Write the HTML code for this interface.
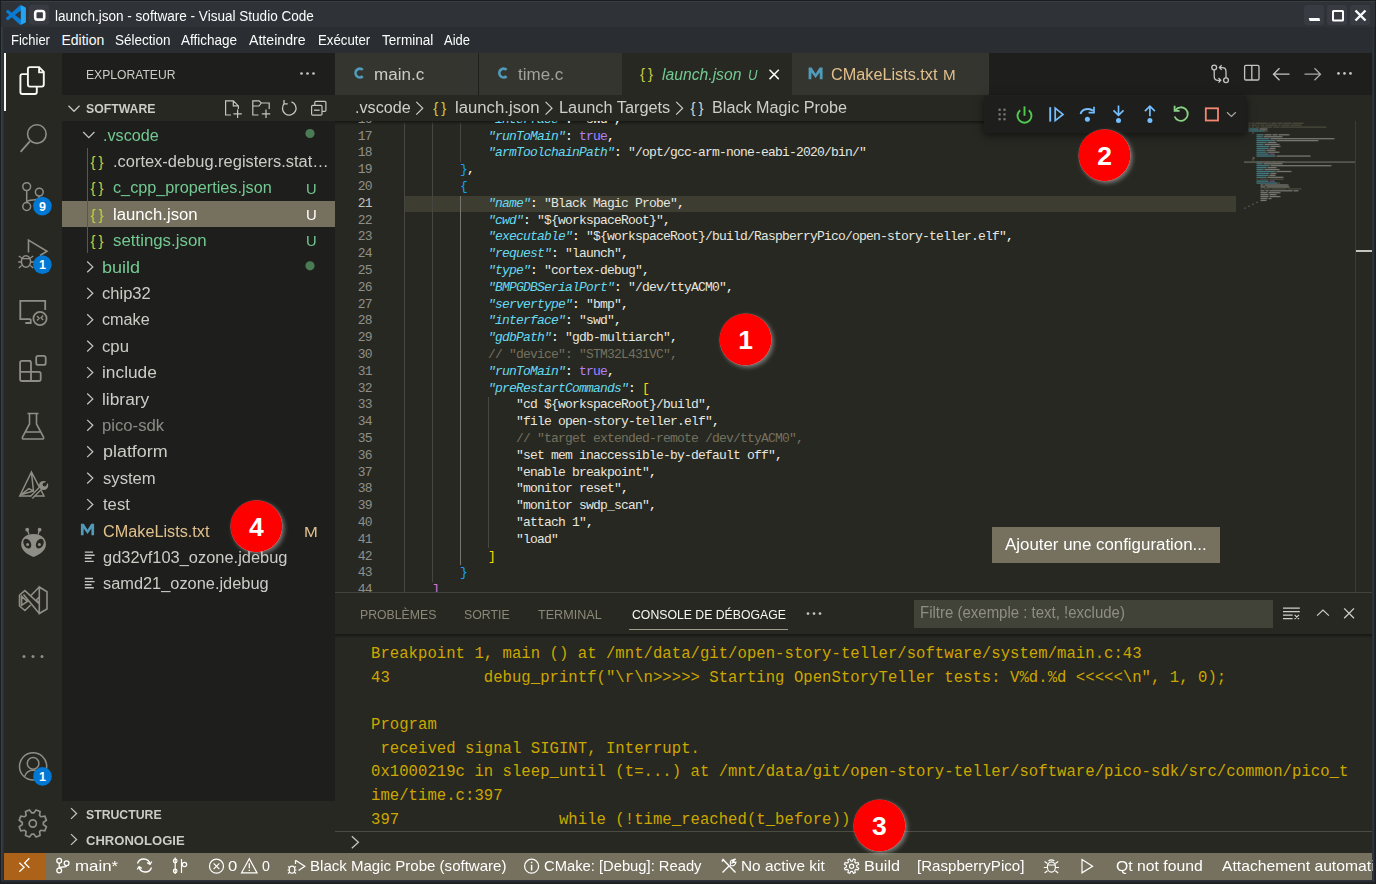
<!DOCTYPE html><html><head><meta charset="utf-8"><style>
*{box-sizing:border-box;margin:0;padding:0}
html,body{width:1376px;height:884px;overflow:hidden;background:#2a2e32}
.a{position:absolute;white-space:pre}
svg{position:absolute;left:0;top:0}
.cd{font-family:"Liberation Mono",monospace;font-size:13px;letter-spacing:-0.8px;line-height:16.8px;color:#f8f8f2}
.k{color:#66d9ef;font-style:italic}.s{color:#e6e6df}.c{color:#75715e}.t{color:#ae81ff}
.cn{font-family:"Liberation Mono",monospace;font-size:15.6px;line-height:23.4px;color:#cca700;letter-spacing:0.04px}

</style></head><body>
<div class="a" style="left:0px;top:0px;width:1376px;height:884px;background:#2a2e32;"></div>
<div class="a" style="left:1px;top:27px;width:1px;height:857px;background:#3a3f47;"></div>
<div class="a" style="left:2px;top:27px;width:1px;height:857px;background:#31363c;"></div>
<div class="a" style="left:3px;top:27px;width:1px;height:857px;background:#2c3034;"></div>
<div class="a" style="left:1372px;top:27px;width:1px;height:857px;background:#2c3039;"></div>
<div class="a" style="left:1373px;top:27px;width:1px;height:857px;background:#303439;"></div>
<div class="a" style="left:1374px;top:27px;width:1px;height:857px;background:#222529;"></div>
<div class="a" style="left:0px;top:880px;width:1376px;height:1px;background:#2c3039;"></div>
<div class="a" style="left:0px;top:881px;width:1376px;height:1px;background:#282b30;"></div>
<div class="a" style="left:0px;top:882px;width:1376px;height:1px;background:#1f2225;"></div>
<div class="a" style="left:0px;top:0px;width:1376px;height:1px;background:#1b1e21;"></div>
<div class="a" style="left:0px;top:883px;width:1376px;height:1px;background:#1c1f22;"></div>
<div class="a" style="left:0px;top:0px;width:1px;height:884px;background:#1b1e21;"></div>
<div class="a" style="left:1375px;top:0px;width:1px;height:884px;background:#1c1f22;"></div>
<div class="a" style="left:1px;top:1px;width:1374px;height:26px;background:#2f3338;"></div>
<div class="a" style="left:1px;top:1px;width:1374px;height:1px;background:#383d42;"></div>
<div class="a" style="left:4px;top:27px;width:1368px;height:26px;background:#2a2e32;"></div>
<div class="a" style="left:4px;top:53px;width:58px;height:800px;background:#272822;"></div>
<div class="a" style="left:4px;top:53px;width:2px;height:58px;background:#f8f8f2;"></div>
<div class="a" style="left:62px;top:53px;width:273px;height:748px;background:#1e1f1c;"></div>
<div class="a" style="left:62px;top:95px;width:273px;height:26.4px;background:#272822;"></div>
<div class="a" style="left:62px;top:801px;width:273px;height:52px;background:#272822;"></div>
<div class="a" style="left:62px;top:200.6px;width:273px;height:26.4px;background:#75715e;"></div>
<div class="a" style="left:86.5px;top:147.8px;width:1px;height:105.6px;background:#585850;"></div>
<div class="a" style="left:335px;top:53px;width:1037px;height:42px;background:#1e1f1c;"></div>
<div class="a" style="left:335px;top:53px;width:143px;height:42px;background:#34352f;"></div>
<div class="a" style="left:479px;top:53px;width:143px;height:42px;background:#34352f;"></div>
<div class="a" style="left:622px;top:53px;width:170px;height:42px;background:#272822;"></div>
<div class="a" style="left:792px;top:53px;width:197px;height:42px;background:#34352f;"></div>
<div class="a" style="left:335px;top:95px;width:1037px;height:26px;background:#272822;"></div>
<div class="a" style="left:335px;top:121px;width:1037px;height:471px;background:#272822;"></div>
<div class="a" style="left:405px;top:195.7px;width:831px;height:16.8px;background:#3e3d32;"></div>
<div class="a" style="left:404px;top:121px;width:1px;height:477.9px;background:#464741;"></div>
<div class="a" style="left:432px;top:121px;width:1px;height:461.1px;background:#464741;"></div>
<div class="a" style="left:460px;top:121px;width:1px;height:41.1px;background:#464741;"></div>
<div class="a" style="left:460px;top:195.7px;width:1px;height:369.6px;background:#767771;"></div>
<div class="a" style="left:488px;top:397.3px;width:1px;height:151.2px;background:#464741;"></div>
<div class="a" style="left:335px;top:121px;width:909px;height:4px;background:linear-gradient(#161713,rgba(39,40,34,0));"></div>
<div class="a" style="left:1355px;top:121px;width:1px;height:471px;background:#3b3c35;"></div>
<div class="a" style="left:1356px;top:250px;width:16px;height:2px;background:#c5c5c0;"></div>
<div class="a" style="left:335px;top:592px;width:1037px;height:1px;background:#414339;"></div>
<div class="a" style="left:335px;top:593px;width:1037px;height:260px;background:#272822;"></div>
<div class="a" style="left:914px;top:600px;width:359px;height:28px;background:#414339;"></div>
<div class="a" style="left:629px;top:629px;width:159px;height:1px;background:#a09d8b;"></div>
<div class="a" style="left:335px;top:633.6px;width:1037px;height:4px;background:linear-gradient(#161713,rgba(39,40,34,0));"></div>
<div class="a" style="left:335px;top:831px;width:1037px;height:1px;background:#4a4b43;"></div>
<div class="a" style="left:992px;top:527px;width:228px;height:36px;background:#75715e;"></div>
<div class="a" style="left:4px;top:853px;width:1368px;height:27px;background:#75715e;"></div>
<div class="a" style="left:4px;top:853px;width:41px;height:27px;background:#ac6218;"></div>
<div class="a" style="left:334px;top:121px;width:1037px;height:471px;overflow:hidden">
<div class="a cd" style="left:0;width:37.8px;text-align:right;top:-9.3px;color:#90908a">16</div>
<div class="a cd" style="left:154px;top:-9.3px"><span class="k">"interface"</span>: <span class="s">"swd"</span>,</div>
<div class="a cd" style="left:0;width:37.8px;text-align:right;top:7.5px;color:#90908a">17</div>
<div class="a cd" style="left:154px;top:7.5px"><span class="k">"runToMain"</span>: <span class="t">true</span>,</div>
<div class="a cd" style="left:0;width:37.8px;text-align:right;top:24.3px;color:#90908a">18</div>
<div class="a cd" style="left:154px;top:24.3px"><span class="k">"armToolchainPath"</span>: <span class="s">"/opt/gcc-arm-none-eabi-2020/bin/"</span></div>
<div class="a cd" style="left:0;width:37.8px;text-align:right;top:41.1px;color:#90908a">19</div>
<div class="a cd" style="left:126px;top:41.1px"><span style="color:#179fff">}</span>,</div>
<div class="a cd" style="left:0;width:37.8px;text-align:right;top:57.9px;color:#90908a">20</div>
<div class="a cd" style="left:126px;top:57.9px"><span style="color:#179fff">{</span></div>
<div class="a cd" style="left:0;width:37.8px;text-align:right;top:74.7px;color:#c2c2bf">21</div>
<div class="a cd" style="left:154px;top:74.7px"><span class="k">"name"</span>: <span class="s">"Black Magic Probe"</span>,</div>
<div class="a cd" style="left:0;width:37.8px;text-align:right;top:91.5px;color:#90908a">22</div>
<div class="a cd" style="left:154px;top:91.5px"><span class="k">"cwd"</span>: <span class="s">"${workspaceRoot}"</span>,</div>
<div class="a cd" style="left:0;width:37.8px;text-align:right;top:108.3px;color:#90908a">23</div>
<div class="a cd" style="left:154px;top:108.3px"><span class="k">"executable"</span>: <span class="s">"${workspaceRoot}/build/RaspberryPico/open-story-teller.elf"</span>,</div>
<div class="a cd" style="left:0;width:37.8px;text-align:right;top:125.1px;color:#90908a">24</div>
<div class="a cd" style="left:154px;top:125.1px"><span class="k">"request"</span>: <span class="s">"launch"</span>,</div>
<div class="a cd" style="left:0;width:37.8px;text-align:right;top:141.9px;color:#90908a">25</div>
<div class="a cd" style="left:154px;top:141.9px"><span class="k">"type"</span>: <span class="s">"cortex-debug"</span>,</div>
<div class="a cd" style="left:0;width:37.8px;text-align:right;top:158.7px;color:#90908a">26</div>
<div class="a cd" style="left:154px;top:158.7px"><span class="k">"BMPGDBSerialPort"</span>: <span class="s">"/dev/ttyACM0"</span>,</div>
<div class="a cd" style="left:0;width:37.8px;text-align:right;top:175.5px;color:#90908a">27</div>
<div class="a cd" style="left:154px;top:175.5px"><span class="k">"servertype"</span>: <span class="s">"bmp"</span>,</div>
<div class="a cd" style="left:0;width:37.8px;text-align:right;top:192.3px;color:#90908a">28</div>
<div class="a cd" style="left:154px;top:192.3px"><span class="k">"interface"</span>: <span class="s">"swd"</span>,</div>
<div class="a cd" style="left:0;width:37.8px;text-align:right;top:209.1px;color:#90908a">29</div>
<div class="a cd" style="left:154px;top:209.1px"><span class="k">"gdbPath"</span>: <span class="s">"gdb-multiarch"</span>,</div>
<div class="a cd" style="left:0;width:37.8px;text-align:right;top:225.9px;color:#90908a">30</div>
<div class="a cd" style="left:154px;top:225.9px"><span class="c">// "device": "STM32L431VC",</span></div>
<div class="a cd" style="left:0;width:37.8px;text-align:right;top:242.7px;color:#90908a">31</div>
<div class="a cd" style="left:154px;top:242.7px"><span class="k">"runToMain"</span>: <span class="t">true</span>,</div>
<div class="a cd" style="left:0;width:37.8px;text-align:right;top:259.5px;color:#90908a">32</div>
<div class="a cd" style="left:154px;top:259.5px"><span class="k">"preRestartCommands"</span>: <span style="color:#ffd700">[</span></div>
<div class="a cd" style="left:0;width:37.8px;text-align:right;top:276.3px;color:#90908a">33</div>
<div class="a cd" style="left:182px;top:276.3px"><span class="s">"cd ${workspaceRoot}/build"</span>,</div>
<div class="a cd" style="left:0;width:37.8px;text-align:right;top:293.1px;color:#90908a">34</div>
<div class="a cd" style="left:182px;top:293.1px"><span class="s">"file open-story-teller.elf"</span>,</div>
<div class="a cd" style="left:0;width:37.8px;text-align:right;top:309.9px;color:#90908a">35</div>
<div class="a cd" style="left:182px;top:309.9px"><span class="c">// "target extended-remote /dev/ttyACM0",</span></div>
<div class="a cd" style="left:0;width:37.8px;text-align:right;top:326.7px;color:#90908a">36</div>
<div class="a cd" style="left:182px;top:326.7px"><span class="s">"set mem inaccessible-by-default off"</span>,</div>
<div class="a cd" style="left:0;width:37.8px;text-align:right;top:343.5px;color:#90908a">37</div>
<div class="a cd" style="left:182px;top:343.5px"><span class="s">"enable breakpoint"</span>,</div>
<div class="a cd" style="left:0;width:37.8px;text-align:right;top:360.3px;color:#90908a">38</div>
<div class="a cd" style="left:182px;top:360.3px"><span class="s">"monitor reset"</span>,</div>
<div class="a cd" style="left:0;width:37.8px;text-align:right;top:377.1px;color:#90908a">39</div>
<div class="a cd" style="left:182px;top:377.1px"><span class="s">"monitor swdp_scan"</span>,</div>
<div class="a cd" style="left:0;width:37.8px;text-align:right;top:393.9px;color:#90908a">40</div>
<div class="a cd" style="left:182px;top:393.9px"><span class="s">"attach 1"</span>,</div>
<div class="a cd" style="left:0;width:37.8px;text-align:right;top:410.7px;color:#90908a">41</div>
<div class="a cd" style="left:182px;top:410.7px"><span class="s">"load"</span></div>
<div class="a cd" style="left:0;width:37.8px;text-align:right;top:427.5px;color:#90908a">42</div>
<div class="a cd" style="left:154px;top:427.5px"><span style="color:#ffd700">]</span></div>
<div class="a cd" style="left:0;width:37.8px;text-align:right;top:444.3px;color:#90908a">43</div>
<div class="a cd" style="left:126px;top:444.3px"><span style="color:#179fff">}</span></div>
<div class="a cd" style="left:0;width:37.8px;text-align:right;top:461.1px;color:#90908a">44</div>
<div class="a cd" style="left:98px;top:461.1px"><span style="color:#da70d6">]</span></div>
</div>
<div class="a cn" style="left:371px;top:643.1px">Breakpoint 1, main () at /mnt/data/git/open-story-teller/software/system/main.c:43</div>
<div class="a cn" style="left:371px;top:666.8px">43          debug_printf("\r\n&gt;&gt;&gt;&gt;&gt; Starting OpenStoryTeller tests: V%d.%d &lt;&lt;&lt;&lt;&lt;\n", 1, 0);</div>
<div class="a cn" style="left:371px;top:714.1px">Program</div>
<div class="a cn" style="left:371px;top:737.7px"> received signal SIGINT, Interrupt.</div>
<div class="a cn" style="left:371px;top:761.4px">0x1000219c in sleep_until (t=...) at /mnt/data/git/open-story-teller/software/pico-sdk/src/common/pico_t</div>
<div class="a cn" style="left:371px;top:785.1px">ime/time.c:397</div>
<div class="a cn" style="left:371px;top:808.7px">397                 while (!time_reached(t_before))</div>
<div id="t0" class="a" style="left:55px;top:9.25px;font-size:14px;line-height:14px;color:#fcfcfc;font-family:'Liberation Sans',sans-serif;font-weight:normal;font-style:normal;transform:scaleX(0.9679);transform-origin:0 0;">launch.json - software - Visual Studio Code</div>
<div id="t1" class="a" style="left:10.5px;top:33.15px;font-size:14px;line-height:14px;color:#fcfcfc;font-family:'Liberation Sans',sans-serif;font-weight:normal;font-style:normal;transform:scaleX(0.9268);transform-origin:0 0;">Fichier</div>
<div id="t2" class="a" style="left:61.4px;top:33.15px;font-size:14px;line-height:14px;color:#fcfcfc;font-family:'Liberation Sans',sans-serif;font-weight:normal;font-style:normal;">Edition</div>
<div id="t3" class="a" style="left:115px;top:33.15px;font-size:14px;line-height:14px;color:#fcfcfc;font-family:'Liberation Sans',sans-serif;font-weight:normal;font-style:normal;transform:scaleX(0.9644);transform-origin:0 0;">Sélection</div>
<div id="t4" class="a" style="left:181px;top:33.15px;font-size:14px;line-height:14px;color:#fcfcfc;font-family:'Liberation Sans',sans-serif;font-weight:normal;font-style:normal;transform:scaleX(0.9655);transform-origin:0 0;">Affichage</div>
<div id="t5" class="a" style="left:249px;top:33.15px;font-size:14px;line-height:14px;color:#fcfcfc;font-family:'Liberation Sans',sans-serif;font-weight:normal;font-style:normal;transform:scaleX(1.0101);transform-origin:0 0;">Atteindre</div>
<div id="t6" class="a" style="left:317.6px;top:33.15px;font-size:14px;line-height:14px;color:#fcfcfc;font-family:'Liberation Sans',sans-serif;font-weight:normal;font-style:normal;transform:scaleX(0.9447);transform-origin:0 0;">Exécuter</div>
<div id="t7" class="a" style="left:381.7px;top:33.15px;font-size:14px;line-height:14px;color:#fcfcfc;font-family:'Liberation Sans',sans-serif;font-weight:normal;font-style:normal;transform:scaleX(0.9713);transform-origin:0 0;">Terminal</div>
<div id="t8" class="a" style="left:444px;top:33.15px;font-size:14px;line-height:14px;color:#fcfcfc;font-family:'Liberation Sans',sans-serif;font-weight:normal;font-style:normal;transform:scaleX(0.9265);transform-origin:0 0;">Aide</div>
<div id="t9" class="a" style="left:85.8px;top:67.69px;font-size:13.6px;line-height:13.6px;color:#ccccc7;font-family:'Liberation Sans',sans-serif;font-weight:normal;font-style:normal;transform:scaleX(0.8920);transform-origin:0 0;">EXPLORATEUR</div>
<div id="t10" class="a" style="left:85.8px;top:102.19px;font-size:13.6px;line-height:13.6px;color:#ccccc7;font-family:'Liberation Sans',sans-serif;font-weight:bold;font-style:normal;transform:scaleX(0.9010);transform-origin:0 0;">SOFTWARE</div>
<div id="t11" class="a" style="left:102.7px;top:127.56px;font-size:16px;line-height:16px;color:#73c991;font-family:'Liberation Sans',sans-serif;font-weight:normal;font-style:normal;transform:scaleX(1.0103);transform-origin:0 0;">.vscode</div>
<div id="t12" class="a" style="left:112.6px;top:153.96px;font-size:16px;line-height:16px;color:#ccccc7;font-family:'Liberation Sans',sans-serif;font-weight:normal;font-style:normal;transform:scaleX(1.0277);transform-origin:0 0;">.cortex-debug.registers.stat…</div>
<div id="t13" class="a" style="left:112.6px;top:180.36px;font-size:16px;line-height:16px;color:#73c991;font-family:'Liberation Sans',sans-serif;font-weight:normal;font-style:normal;transform:scaleX(1.0138);transform-origin:0 0;">c_cpp_properties.json</div>
<div id="t14" class="a" style="left:112.6px;top:206.76px;font-size:16px;line-height:16px;color:#ffffff;font-family:'Liberation Sans',sans-serif;font-weight:normal;font-style:normal;transform:scaleX(1.0452);transform-origin:0 0;">launch.json</div>
<div id="t15" class="a" style="left:112.6px;top:233.16px;font-size:16px;line-height:16px;color:#73c991;font-family:'Liberation Sans',sans-serif;font-weight:normal;font-style:normal;transform:scaleX(1.0526);transform-origin:0 0;">settings.json</div>
<div id="t16" class="a" style="left:102.4px;top:259.56px;font-size:16px;line-height:16px;color:#73c991;font-family:'Liberation Sans',sans-serif;font-weight:normal;font-style:normal;transform:scaleX(1.1255);transform-origin:0 0;">build</div>
<div id="t17" class="a" style="left:102.4px;top:285.96px;font-size:16px;line-height:16px;color:#ccccc7;font-family:'Liberation Sans',sans-serif;font-weight:normal;font-style:normal;transform:scaleX(1.0341);transform-origin:0 0;">chip32</div>
<div id="t18" class="a" style="left:102.4px;top:312.36px;font-size:16px;line-height:16px;color:#ccccc7;font-family:'Liberation Sans',sans-serif;font-weight:normal;font-style:normal;transform:scaleX(1.0127);transform-origin:0 0;">cmake</div>
<div id="t19" class="a" style="left:102.4px;top:338.76px;font-size:16px;line-height:16px;color:#ccccc7;font-family:'Liberation Sans',sans-serif;font-weight:normal;font-style:normal;transform:scaleX(1.0438);transform-origin:0 0;">cpu</div>
<div id="t20" class="a" style="left:102.4px;top:365.16px;font-size:16px;line-height:16px;color:#ccccc7;font-family:'Liberation Sans',sans-serif;font-weight:normal;font-style:normal;transform:scaleX(1.0818);transform-origin:0 0;">include</div>
<div id="t21" class="a" style="left:102.4px;top:391.56px;font-size:16px;line-height:16px;color:#ccccc7;font-family:'Liberation Sans',sans-serif;font-weight:normal;font-style:normal;transform:scaleX(1.0843);transform-origin:0 0;">library</div>
<div id="t22" class="a" style="left:102.4px;top:417.96px;font-size:16px;line-height:16px;color:#8b8b86;font-family:'Liberation Sans',sans-serif;font-weight:normal;font-style:normal;transform:scaleX(1.0432);transform-origin:0 0;">pico-sdk</div>
<div id="t23" class="a" style="left:102.5px;top:444.36px;font-size:16px;line-height:16px;color:#ccccc7;font-family:'Liberation Sans',sans-serif;font-weight:normal;font-style:normal;transform:scaleX(1.1187);transform-origin:0 0;">platform</div>
<div id="t24" class="a" style="left:102.5px;top:470.76px;font-size:16px;line-height:16px;color:#ccccc7;font-family:'Liberation Sans',sans-serif;font-weight:normal;font-style:normal;transform:scaleX(1.0410);transform-origin:0 0;">system</div>
<div id="t25" class="a" style="left:102.5px;top:497.16px;font-size:16px;line-height:16px;color:#ccccc7;font-family:'Liberation Sans',sans-serif;font-weight:normal;font-style:normal;transform:scaleX(1.0399);transform-origin:0 0;">test</div>
<div id="t26" class="a" style="left:102.5px;top:523.56px;font-size:16px;line-height:16px;color:#e2c08d;font-family:'Liberation Sans',sans-serif;font-weight:normal;font-style:normal;transform:scaleX(1.0151);transform-origin:0 0;">CMakeLists.txt</div>
<div id="t27" class="a" style="left:102.5px;top:549.96px;font-size:16px;line-height:16px;color:#ccccc7;font-family:'Liberation Sans',sans-serif;font-weight:normal;font-style:normal;transform:scaleX(1.0266);transform-origin:0 0;">gd32vf103_ozone.jdebug</div>
<div id="t28" class="a" style="left:102.5px;top:576.36px;font-size:16px;line-height:16px;color:#ccccc7;font-family:'Liberation Sans',sans-serif;font-weight:normal;font-style:normal;transform:scaleX(1.0227);transform-origin:0 0;">samd21_ozone.jdebug</div>
<div id="t29" class="a" style="left:306px;top:181.63px;font-size:14.5px;line-height:14.5px;color:#73c991;font-family:'Liberation Sans',sans-serif;font-weight:normal;font-style:normal;transform:scaleX(1.0125);transform-origin:0 0;">U</div>
<div id="t30" class="a" style="left:306px;top:208.03px;font-size:14.5px;line-height:14.5px;color:#ffffff;font-family:'Liberation Sans',sans-serif;font-weight:normal;font-style:normal;transform:scaleX(1.0252);transform-origin:0 0;">U</div>
<div id="t31" class="a" style="left:306px;top:234.43px;font-size:14.5px;line-height:14.5px;color:#73c991;font-family:'Liberation Sans',sans-serif;font-weight:normal;font-style:normal;transform:scaleX(1.0125);transform-origin:0 0;">U</div>
<div id="t32" class="a" style="left:303.7px;top:524.83px;font-size:14.5px;line-height:14.5px;color:#e2c08d;font-family:'Liberation Sans',sans-serif;font-weight:normal;font-style:normal;transform:scaleX(1.1413);transform-origin:0 0;">M</div>
<div id="t33" class="a" style="left:85.8px;top:808.09px;font-size:13.6px;line-height:13.6px;color:#ccccc7;font-family:'Liberation Sans',sans-serif;font-weight:bold;font-style:normal;transform:scaleX(0.9019);transform-origin:0 0;">STRUCTURE</div>
<div id="t34" class="a" style="left:85.8px;top:834.09px;font-size:13.6px;line-height:13.6px;color:#ccccc7;font-family:'Liberation Sans',sans-serif;font-weight:bold;font-style:normal;transform:scaleX(0.9604);transform-origin:0 0;">CHRONOLOGIE</div>
<div id="t35" class="a" style="left:373.8px;top:66.66px;font-size:16px;line-height:16px;color:#ccccc7;font-family:'Liberation Sans',sans-serif;font-weight:normal;font-style:normal;transform:scaleX(1.0655);transform-origin:0 0;">main.c</div>
<div id="t36" class="a" style="left:517.7px;top:66.66px;font-size:16px;line-height:16px;color:#a3a39c;font-family:'Liberation Sans',sans-serif;font-weight:normal;font-style:normal;transform:scaleX(1.0615);transform-origin:0 0;">time.c</div>
<div id="t37" class="a" style="left:662px;top:66.66px;font-size:16px;line-height:16px;color:#73c991;font-family:'Liberation Sans',sans-serif;font-weight:normal;font-style:italic;transform:scaleX(0.9813);transform-origin:0 0;">launch.json</div>
<div id="t38" class="a" style="left:747.7px;top:68.01px;font-size:14.4px;line-height:14.4px;color:#73c991;font-family:'Liberation Sans',sans-serif;font-weight:normal;font-style:italic;transform:scaleX(0.9075);transform-origin:0 0;">U</div>
<div id="t39" class="a" style="left:830.6px;top:66.66px;font-size:16px;line-height:16px;color:#e2c08d;font-family:'Liberation Sans',sans-serif;font-weight:normal;font-style:normal;transform:scaleX(1.0149);transform-origin:0 0;">CMakeLists.txt</div>
<div id="t40" class="a" style="left:943.2px;top:68.01px;font-size:14.4px;line-height:14.4px;color:#e2c08d;font-family:'Liberation Sans',sans-serif;font-weight:normal;font-style:normal;transform:scaleX(1.0550);transform-origin:0 0;">M</div>
<div id="t41" class="a" style="left:355px;top:100.46px;font-size:16px;line-height:16px;color:#cfcfca;font-family:'Liberation Sans',sans-serif;font-weight:normal;font-style:normal;transform:scaleX(1.0099);transform-origin:0 0;">.vscode</div>
<div id="t42" class="a" style="left:455.3px;top:100.46px;font-size:16px;line-height:16px;color:#cfcfca;font-family:'Liberation Sans',sans-serif;font-weight:normal;font-style:normal;transform:scaleX(1.0451);transform-origin:0 0;">launch.json</div>
<div id="t43" class="a" style="left:558.6px;top:100.46px;font-size:16px;line-height:16px;color:#cfcfca;font-family:'Liberation Sans',sans-serif;font-weight:normal;font-style:normal;transform:scaleX(1.0192);transform-origin:0 0;">Launch Targets</div>
<div id="t44" class="a" style="left:711.6px;top:100.46px;font-size:16px;line-height:16px;color:#cfcfca;font-family:'Liberation Sans',sans-serif;font-weight:normal;font-style:normal;transform:scaleX(1.0121);transform-origin:0 0;">Black Magic Probe</div>
<div id="t45" class="a" style="left:359.6px;top:607.79px;font-size:13.6px;line-height:13.6px;color:#8b8877;font-family:'Liberation Sans',sans-serif;font-weight:normal;font-style:normal;transform:scaleX(0.9030);transform-origin:0 0;">PROBLÈMES</div>
<div id="t46" class="a" style="left:463.8px;top:607.79px;font-size:13.6px;line-height:13.6px;color:#8b8877;font-family:'Liberation Sans',sans-serif;font-weight:normal;font-style:normal;transform:scaleX(0.9072);transform-origin:0 0;">SORTIE</div>
<div id="t47" class="a" style="left:538px;top:607.79px;font-size:13.6px;line-height:13.6px;color:#8b8877;font-family:'Liberation Sans',sans-serif;font-weight:normal;font-style:normal;transform:scaleX(0.9260);transform-origin:0 0;">TERMINAL</div>
<div id="t48" class="a" style="left:631.6px;top:607.79px;font-size:13.6px;line-height:13.6px;color:#f8f8f2;font-family:'Liberation Sans',sans-serif;font-weight:normal;font-style:normal;transform:scaleX(0.9013);transform-origin:0 0;">CONSOLE DE DÉBOGAGE</div>
<div id="t49" class="a" style="left:920.3px;top:605.36px;font-size:16px;line-height:16px;color:#8f8e85;font-family:'Liberation Sans',sans-serif;font-weight:normal;font-style:normal;transform:scaleX(0.9369);transform-origin:0 0;">Filtre (exemple : text, !exclude)</div>
<div id="t50" class="a" style="left:1005px;top:537.36px;font-size:16px;line-height:16px;color:#ffffff;font-family:'Liberation Sans',sans-serif;font-weight:normal;font-style:normal;transform:scaleX(1.0544);transform-origin:0 0;">Ajouter une configuration...</div>
<div id="t51" class="a" style="left:75.3px;top:859.27px;font-size:14.8px;line-height:14.8px;color:#ffffff;font-family:'Liberation Sans',sans-serif;font-weight:normal;font-style:normal;transform:scaleX(1.1393);transform-origin:0 0;">main*</div>
<div id="t52" class="a" style="left:228px;top:859.27px;font-size:14.8px;line-height:14.8px;color:#ffffff;font-family:'Liberation Sans',sans-serif;font-weight:normal;font-style:normal;transform:scaleX(1.1250);transform-origin:0 0;">0</div>
<div id="t53" class="a" style="left:261.5px;top:859.27px;font-size:14.8px;line-height:14.8px;color:#ffffff;font-family:'Liberation Sans',sans-serif;font-weight:normal;font-style:normal;transform:scaleX(0.9609);transform-origin:0 0;">0</div>
<div id="t54" class="a" style="left:309.6px;top:859.27px;font-size:14.8px;line-height:14.8px;color:#ffffff;font-family:'Liberation Sans',sans-serif;font-weight:normal;font-style:normal;transform:scaleX(1.0167);transform-origin:0 0;">Black Magic Probe (software)</div>
<div id="t55" class="a" style="left:544.3px;top:859.27px;font-size:14.8px;line-height:14.8px;color:#ffffff;font-family:'Liberation Sans',sans-serif;font-weight:normal;font-style:normal;transform:scaleX(0.9973);transform-origin:0 0;">CMake: [Debug]: Ready</div>
<div id="t56" class="a" style="left:741.4px;top:859.27px;font-size:14.8px;line-height:14.8px;color:#ffffff;font-family:'Liberation Sans',sans-serif;font-weight:normal;font-style:normal;transform:scaleX(1.0392);transform-origin:0 0;">No active kit</div>
<div id="t57" class="a" style="left:864px;top:859.27px;font-size:14.8px;line-height:14.8px;color:#ffffff;font-family:'Liberation Sans',sans-serif;font-weight:normal;font-style:normal;transform:scaleX(1.0968);transform-origin:0 0;">Build</div>
<div id="t58" class="a" style="left:917.4px;top:859.27px;font-size:14.8px;line-height:14.8px;color:#ffffff;font-family:'Liberation Sans',sans-serif;font-weight:normal;font-style:normal;transform:scaleX(1.0204);transform-origin:0 0;">[RaspberryPico]</div>
<div id="t59" class="a" style="left:1115.6px;top:859.27px;font-size:14.8px;line-height:14.8px;color:#ffffff;font-family:'Liberation Sans',sans-serif;font-weight:normal;font-style:normal;transform:scaleX(1.0648);transform-origin:0 0;">Qt not found</div>
<div id="t60" class="a" style="left:1221.5px;top:859.27px;font-size:14.8px;line-height:14.8px;color:#ffffff;font-family:'Liberation Sans',sans-serif;font-weight:normal;font-style:normal;width:142px;overflow:hidden;transform:scaleX(1.06);transform-origin:0 0;">Attachement automatique : Intelligent</div>
<svg width="1376" height="884" viewBox="0 0 1376 884"><rect x="1248.5" y="122.60" width="2" height="1.3" fill="#75715e" opacity="0.45"/><rect x="1251.5" y="122.60" width="3" height="1.3" fill="#75715e" opacity="0.45"/><rect x="1255.5" y="122.60" width="12" height="1.3" fill="#75715e" opacity="0.45"/><rect x="1268.5" y="122.60" width="2" height="1.3" fill="#75715e" opacity="0.45"/><rect x="1271.5" y="122.60" width="5" height="1.3" fill="#75715e" opacity="0.45"/><rect x="1277.5" y="122.60" width="5" height="1.3" fill="#75715e" opacity="0.45"/><rect x="1283.5" y="122.60" width="8" height="1.3" fill="#75715e" opacity="0.45"/><rect x="1292.5" y="122.60" width="11" height="1.3" fill="#75715e" opacity="0.45"/><rect x="1248.5" y="124.53" width="2" height="1.3" fill="#75715e" opacity="0.45"/><rect x="1251.5" y="124.53" width="5" height="1.3" fill="#75715e" opacity="0.45"/><rect x="1257.5" y="124.53" width="2" height="1.3" fill="#75715e" opacity="0.45"/><rect x="1260.5" y="124.53" width="4" height="1.3" fill="#75715e" opacity="0.45"/><rect x="1265.5" y="124.53" width="12" height="1.3" fill="#75715e" opacity="0.45"/><rect x="1278.5" y="124.53" width="2" height="1.3" fill="#75715e" opacity="0.45"/><rect x="1281.5" y="124.53" width="8" height="1.3" fill="#75715e" opacity="0.45"/><rect x="1290.5" y="124.53" width="11" height="1.3" fill="#75715e" opacity="0.45"/><rect x="1248.5" y="126.46" width="2" height="1.3" fill="#75715e" opacity="0.45"/><rect x="1251.5" y="126.46" width="3" height="1.3" fill="#75715e" opacity="0.45"/><rect x="1255.5" y="126.46" width="4" height="1.3" fill="#75715e" opacity="0.45"/><rect x="1260.5" y="126.46" width="12" height="1.3" fill="#75715e" opacity="0.45"/><rect x="1273.5" y="126.46" width="6" height="1.3" fill="#75715e" opacity="0.45"/><rect x="1280.5" y="126.46" width="46" height="1.3" fill="#75715e" opacity="0.45"/><rect x="1248.5" y="128.39" width="9" height="1.3" fill="#66d9ef" opacity="0.45"/><rect x="1257.5" y="128.39" width="1" height="1.3" fill="#d8d8d0" opacity="0.45"/><rect x="1259.5" y="128.39" width="7" height="1.3" fill="#d8d8d0" opacity="0.45"/><rect x="1266.5" y="128.39" width="1" height="1.3" fill="#d8d8d0" opacity="0.45"/><rect x="1248.5" y="130.32" width="16" height="1.3" fill="#66d9ef" opacity="0.45"/><rect x="1264.5" y="130.32" width="1" height="1.3" fill="#d8d8d0" opacity="0.45"/><rect x="1266.5" y="130.32" width="1" height="1.3" fill="#d8d8d0" opacity="0.45"/><rect x="1252.5" y="132.25" width="1" height="1.3" fill="#d8d8d0" opacity="0.45"/><rect x="1256.5" y="134.18" width="6" height="1.3" fill="#66d9ef" opacity="0.45"/><rect x="1262.5" y="134.18" width="1" height="1.3" fill="#d8d8d0" opacity="0.45"/><rect x="1264.5" y="134.18" width="7" height="1.3" fill="#d8d8d0" opacity="0.45"/><rect x="1272.5" y="134.18" width="5" height="1.3" fill="#d8d8d0" opacity="0.45"/><rect x="1278.5" y="134.18" width="10" height="1.3" fill="#d8d8d0" opacity="0.45"/><rect x="1288.5" y="134.18" width="1" height="1.3" fill="#d8d8d0" opacity="0.45"/><rect x="1256.5" y="136.11" width="5" height="1.3" fill="#66d9ef" opacity="0.45"/><rect x="1261.5" y="136.11" width="1" height="1.3" fill="#d8d8d0" opacity="0.45"/><rect x="1263.5" y="136.11" width="18" height="1.3" fill="#d8d8d0" opacity="0.45"/><rect x="1281.5" y="136.11" width="1" height="1.3" fill="#d8d8d0" opacity="0.45"/><rect x="1256.5" y="138.04" width="12" height="1.3" fill="#66d9ef" opacity="0.45"/><rect x="1268.5" y="138.04" width="1" height="1.3" fill="#d8d8d0" opacity="0.45"/><rect x="1270.5" y="138.04" width="63" height="1.3" fill="#d8d8d0" opacity="0.45"/><rect x="1333.5" y="138.04" width="1" height="1.3" fill="#d8d8d0" opacity="0.45"/><rect x="1256.5" y="139.97" width="18" height="1.3" fill="#66d9ef" opacity="0.45"/><rect x="1274.5" y="139.97" width="1" height="1.3" fill="#d8d8d0" opacity="0.45"/><rect x="1276.5" y="139.97" width="41" height="1.3" fill="#d8d8d0" opacity="0.45"/><rect x="1317.5" y="139.97" width="1" height="1.3" fill="#d8d8d0" opacity="0.45"/><rect x="1256.5" y="141.90" width="9" height="1.3" fill="#66d9ef" opacity="0.45"/><rect x="1265.5" y="141.90" width="1" height="1.3" fill="#d8d8d0" opacity="0.45"/><rect x="1267.5" y="141.90" width="8" height="1.3" fill="#d8d8d0" opacity="0.45"/><rect x="1275.5" y="141.90" width="1" height="1.3" fill="#d8d8d0" opacity="0.45"/><rect x="1256.5" y="143.83" width="6" height="1.3" fill="#66d9ef" opacity="0.45"/><rect x="1262.5" y="143.83" width="1" height="1.3" fill="#d8d8d0" opacity="0.45"/><rect x="1264.5" y="143.83" width="14" height="1.3" fill="#d8d8d0" opacity="0.45"/><rect x="1278.5" y="143.83" width="1" height="1.3" fill="#d8d8d0" opacity="0.45"/><rect x="1256.5" y="145.76" width="12" height="1.3" fill="#66d9ef" opacity="0.45"/><rect x="1268.5" y="145.76" width="1" height="1.3" fill="#d8d8d0" opacity="0.45"/><rect x="1270.5" y="145.76" width="9" height="1.3" fill="#d8d8d0" opacity="0.45"/><rect x="1279.5" y="145.76" width="1" height="1.3" fill="#d8d8d0" opacity="0.45"/><rect x="1256.5" y="147.69" width="11" height="1.3" fill="#66d9ef" opacity="0.45"/><rect x="1267.5" y="147.69" width="1" height="1.3" fill="#d8d8d0" opacity="0.45"/><rect x="1269.5" y="147.69" width="5" height="1.3" fill="#d8d8d0" opacity="0.45"/><rect x="1274.5" y="147.69" width="1" height="1.3" fill="#d8d8d0" opacity="0.45"/><rect x="1256.5" y="149.62" width="8" height="1.3" fill="#66d9ef" opacity="0.45"/><rect x="1264.5" y="149.62" width="1" height="1.3" fill="#d8d8d0" opacity="0.45"/><rect x="1266.5" y="149.62" width="8" height="1.3" fill="#d8d8d0" opacity="0.45"/><rect x="1274.5" y="149.62" width="1" height="1.3" fill="#d8d8d0" opacity="0.45"/><rect x="1256.5" y="151.55" width="9" height="1.3" fill="#66d9ef" opacity="0.45"/><rect x="1265.5" y="151.55" width="1" height="1.3" fill="#d8d8d0" opacity="0.45"/><rect x="1267.5" y="151.55" width="11" height="1.3" fill="#d8d8d0" opacity="0.45"/><rect x="1278.5" y="151.55" width="1" height="1.3" fill="#d8d8d0" opacity="0.45"/><rect x="1256.5" y="153.48" width="11" height="1.3" fill="#66d9ef" opacity="0.45"/><rect x="1267.5" y="153.48" width="1" height="1.3" fill="#d8d8d0" opacity="0.45"/><rect x="1269.5" y="153.48" width="4" height="1.3" fill="#ae81ff" opacity="0.45"/><rect x="1273.5" y="153.48" width="1" height="1.3" fill="#d8d8d0" opacity="0.45"/><rect x="1256.5" y="155.41" width="18" height="1.3" fill="#66d9ef" opacity="0.45"/><rect x="1274.5" y="155.41" width="1" height="1.3" fill="#d8d8d0" opacity="0.45"/><rect x="1276.5" y="155.41" width="34" height="1.3" fill="#d8d8d0" opacity="0.45"/><rect x="1252.5" y="157.34" width="2" height="1.3" fill="#d8d8d0" opacity="0.45"/><rect x="1252.5" y="159.27" width="1" height="1.3" fill="#d8d8d0" opacity="0.45"/><rect x="1256.5" y="161.20" width="6" height="1.3" fill="#66d9ef" opacity="0.45"/><rect x="1262.5" y="161.20" width="1" height="1.3" fill="#d8d8d0" opacity="0.45"/><rect x="1264.5" y="161.20" width="6" height="1.3" fill="#d8d8d0" opacity="0.45"/><rect x="1271.5" y="161.20" width="5" height="1.3" fill="#d8d8d0" opacity="0.45"/><rect x="1277.5" y="161.20" width="6" height="1.3" fill="#d8d8d0" opacity="0.45"/><rect x="1283.5" y="161.20" width="1" height="1.3" fill="#d8d8d0" opacity="0.45"/><rect x="1256.5" y="163.13" width="5" height="1.3" fill="#66d9ef" opacity="0.45"/><rect x="1261.5" y="163.13" width="1" height="1.3" fill="#d8d8d0" opacity="0.45"/><rect x="1263.5" y="163.13" width="18" height="1.3" fill="#d8d8d0" opacity="0.45"/><rect x="1281.5" y="163.13" width="1" height="1.3" fill="#d8d8d0" opacity="0.45"/><rect x="1256.5" y="165.06" width="12" height="1.3" fill="#66d9ef" opacity="0.45"/><rect x="1268.5" y="165.06" width="1" height="1.3" fill="#d8d8d0" opacity="0.45"/><rect x="1270.5" y="165.06" width="60" height="1.3" fill="#d8d8d0" opacity="0.45"/><rect x="1330.5" y="165.06" width="1" height="1.3" fill="#d8d8d0" opacity="0.45"/><rect x="1256.5" y="166.99" width="9" height="1.3" fill="#66d9ef" opacity="0.45"/><rect x="1265.5" y="166.99" width="1" height="1.3" fill="#d8d8d0" opacity="0.45"/><rect x="1267.5" y="166.99" width="8" height="1.3" fill="#d8d8d0" opacity="0.45"/><rect x="1275.5" y="166.99" width="1" height="1.3" fill="#d8d8d0" opacity="0.45"/><rect x="1256.5" y="168.92" width="6" height="1.3" fill="#66d9ef" opacity="0.45"/><rect x="1262.5" y="168.92" width="1" height="1.3" fill="#d8d8d0" opacity="0.45"/><rect x="1264.5" y="168.92" width="14" height="1.3" fill="#d8d8d0" opacity="0.45"/><rect x="1278.5" y="168.92" width="1" height="1.3" fill="#d8d8d0" opacity="0.45"/><rect x="1256.5" y="170.85" width="18" height="1.3" fill="#66d9ef" opacity="0.45"/><rect x="1274.5" y="170.85" width="1" height="1.3" fill="#d8d8d0" opacity="0.45"/><rect x="1276.5" y="170.85" width="14" height="1.3" fill="#d8d8d0" opacity="0.45"/><rect x="1290.5" y="170.85" width="1" height="1.3" fill="#d8d8d0" opacity="0.45"/><rect x="1256.5" y="172.78" width="12" height="1.3" fill="#66d9ef" opacity="0.45"/><rect x="1268.5" y="172.78" width="1" height="1.3" fill="#d8d8d0" opacity="0.45"/><rect x="1270.5" y="172.78" width="5" height="1.3" fill="#d8d8d0" opacity="0.45"/><rect x="1275.5" y="172.78" width="1" height="1.3" fill="#d8d8d0" opacity="0.45"/><rect x="1256.5" y="174.71" width="11" height="1.3" fill="#66d9ef" opacity="0.45"/><rect x="1267.5" y="174.71" width="1" height="1.3" fill="#d8d8d0" opacity="0.45"/><rect x="1269.5" y="174.71" width="5" height="1.3" fill="#d8d8d0" opacity="0.45"/><rect x="1274.5" y="174.71" width="1" height="1.3" fill="#d8d8d0" opacity="0.45"/><rect x="1256.5" y="176.64" width="9" height="1.3" fill="#66d9ef" opacity="0.45"/><rect x="1265.5" y="176.64" width="1" height="1.3" fill="#d8d8d0" opacity="0.45"/><rect x="1267.5" y="176.64" width="15" height="1.3" fill="#d8d8d0" opacity="0.45"/><rect x="1282.5" y="176.64" width="1" height="1.3" fill="#d8d8d0" opacity="0.45"/><rect x="1256.5" y="178.57" width="2" height="1.3" fill="#75715e" opacity="0.45"/><rect x="1259.5" y="178.57" width="9" height="1.3" fill="#75715e" opacity="0.45"/><rect x="1269.5" y="178.57" width="14" height="1.3" fill="#75715e" opacity="0.45"/><rect x="1256.5" y="180.50" width="11" height="1.3" fill="#66d9ef" opacity="0.45"/><rect x="1267.5" y="180.50" width="1" height="1.3" fill="#d8d8d0" opacity="0.45"/><rect x="1269.5" y="180.50" width="4" height="1.3" fill="#ae81ff" opacity="0.45"/><rect x="1273.5" y="180.50" width="1" height="1.3" fill="#d8d8d0" opacity="0.45"/><rect x="1256.5" y="182.43" width="20" height="1.3" fill="#66d9ef" opacity="0.45"/><rect x="1276.5" y="182.43" width="1" height="1.3" fill="#d8d8d0" opacity="0.45"/><rect x="1278.5" y="182.43" width="1" height="1.3" fill="#d8d8d0" opacity="0.45"/><rect x="1260.5" y="184.36" width="3" height="1.3" fill="#d8d8d0" opacity="0.45"/><rect x="1264.5" y="184.36" width="23" height="1.3" fill="#d8d8d0" opacity="0.45"/><rect x="1287.5" y="184.36" width="1" height="1.3" fill="#d8d8d0" opacity="0.45"/><rect x="1260.5" y="186.29" width="5" height="1.3" fill="#d8d8d0" opacity="0.45"/><rect x="1266.5" y="186.29" width="22" height="1.3" fill="#d8d8d0" opacity="0.45"/><rect x="1288.5" y="186.29" width="1" height="1.3" fill="#d8d8d0" opacity="0.45"/><rect x="1260.5" y="188.22" width="2" height="1.3" fill="#75715e" opacity="0.45"/><rect x="1263.5" y="188.22" width="7" height="1.3" fill="#75715e" opacity="0.45"/><rect x="1271.5" y="188.22" width="15" height="1.3" fill="#75715e" opacity="0.45"/><rect x="1287.5" y="188.22" width="14" height="1.3" fill="#75715e" opacity="0.45"/><rect x="1260.5" y="190.15" width="4" height="1.3" fill="#d8d8d0" opacity="0.45"/><rect x="1265.5" y="190.15" width="3" height="1.3" fill="#d8d8d0" opacity="0.45"/><rect x="1269.5" y="190.15" width="23" height="1.3" fill="#d8d8d0" opacity="0.45"/><rect x="1293.5" y="190.15" width="4" height="1.3" fill="#d8d8d0" opacity="0.45"/><rect x="1297.5" y="190.15" width="1" height="1.3" fill="#d8d8d0" opacity="0.45"/><rect x="1260.5" y="192.08" width="7" height="1.3" fill="#d8d8d0" opacity="0.45"/><rect x="1268.5" y="192.08" width="11" height="1.3" fill="#d8d8d0" opacity="0.45"/><rect x="1279.5" y="192.08" width="1" height="1.3" fill="#d8d8d0" opacity="0.45"/><rect x="1260.5" y="194.01" width="8" height="1.3" fill="#d8d8d0" opacity="0.45"/><rect x="1269.5" y="194.01" width="6" height="1.3" fill="#d8d8d0" opacity="0.45"/><rect x="1275.5" y="194.01" width="1" height="1.3" fill="#d8d8d0" opacity="0.45"/><rect x="1260.5" y="195.94" width="8" height="1.3" fill="#d8d8d0" opacity="0.45"/><rect x="1269.5" y="195.94" width="10" height="1.3" fill="#d8d8d0" opacity="0.45"/><rect x="1279.5" y="195.94" width="1" height="1.3" fill="#d8d8d0" opacity="0.45"/><rect x="1260.5" y="197.87" width="7" height="1.3" fill="#d8d8d0" opacity="0.45"/><rect x="1268.5" y="197.87" width="2" height="1.3" fill="#d8d8d0" opacity="0.45"/><rect x="1270.5" y="197.87" width="1" height="1.3" fill="#d8d8d0" opacity="0.45"/><rect x="1260.5" y="199.80" width="6" height="1.3" fill="#d8d8d0" opacity="0.45"/><rect x="1256.5" y="201.73" width="1" height="1.3" fill="#d8d8d0" opacity="0.45"/><rect x="1252.5" y="203.66" width="1" height="1.3" fill="#d8d8d0" opacity="0.45"/><rect x="1248.5" y="205.59" width="1" height="1.3" fill="#d8d8d0" opacity="0.45"/><rect x="1244.5" y="207.52" width="1" height="1.3" fill="#d8d8d0" opacity="0.45"/><rect x="1244" y="161.3" width="111" height="1.6" fill="#5a5a52"/><g transform="translate(6,5.1) scale(0.198)"><path d="M96.46 10.8L75.86.9a6.2 6.2 0 0 0-7.07 1.2L29.3 38.13 12.1 25.08a4.13 4.13 0 0 0-5.28.23l-5.5 5a4.13 4.13 0 0 0 0 6.11L16.2 50 1.3 63.58a4.13 4.13 0 0 0 0 6.11l5.5 5a4.13 4.13 0 0 0 5.28.23l17.2-13.05 39.5 36.03a6.2 6.2 0 0 0 7.07 1.2l20.6-9.92A6.25 6.25 0 0 0 100 83.56V16.44a6.25 6.25 0 0 0-3.54-5.64zM75 72.7L45.1 50 75 27.3z" fill="#0a7bd0"/><path d="M75 0.5 L96.46 10.8 A6.25 6.25 0 0 1 100 16.44 V83.56 A6.25 6.25 0 0 1 96.46 89.2 L75 99.5 Z" fill="#23a3f0"/></g><rect x="28.8" y="4.8" width="20.2" height="20" rx="3" fill="#383c42" stroke="none" stroke-width="1"/><rect x="35.2" y="11" width="9" height="8.6" rx="2.2" fill="none" stroke="#fcfcfc" stroke-width="2.6"/><rect x="1304" y="5" width="20" height="20" rx="3" fill="#383c42" stroke="none" stroke-width="1"/><rect x="1327" y="5" width="20" height="20" rx="3" fill="#383c42" stroke="none" stroke-width="1"/><rect x="1350" y="5" width="20" height="20" rx="3" fill="#383c42" stroke="none" stroke-width="1"/><path d="M1308.8 18 H1319.4 L1320.2 21 H1309.6 Z" fill="#fcfcfc" /><rect x="1333" y="11" width="10" height="9.5" rx="0.5" fill="none" stroke="#fcfcfc" stroke-width="2"/><path d="M1355.5 10.5 L1365.5 20.5 M1365.5 10.5 L1355.5 20.5" fill="none" stroke="#fcfcfc" stroke-width="2.4" /><path d="M27.9 74.1 H22.4 Q20.4 74.1 20.4 76.1 V92 Q20.4 94 22.4 94 H34.8 Q36.8 94 36.8 92 V86.6" fill="none" stroke="#f8f8f2" stroke-width="1.9" /><path d="M29.9 67.1 H39.1 L43.8 71.8 V84.6 Q43.8 86.6 41.8 86.6 H29.9 Q27.9 86.6 27.9 84.6 V69.1 Q27.9 67.1 29.9 67.1 Z M39.1 67.1 V72.4 H43.8" fill="none" stroke="#f8f8f2" stroke-width="1.9" /><circle cx="36.85" cy="134.1" r="9.3" fill="none" stroke="#8f8e86" stroke-width="1.6"/><path d="M20.6 151.9 L29.8 141.4" fill="none" stroke="#8f8e86" stroke-width="1.8" /><circle cx="26.7" cy="186.6" r="3.9" fill="none" stroke="#8f8e86" stroke-width="1.5"/><circle cx="39.3" cy="192.1" r="3.9" fill="none" stroke="#8f8e86" stroke-width="1.5"/><circle cx="26.7" cy="206.5" r="3.9" fill="none" stroke="#8f8e86" stroke-width="1.5"/><path d="M26.7 190.5 V202.6 M39.3 196 Q39.3 200 33 200 Q26.7 200 26.7 203" fill="none" stroke="#8f8e86" stroke-width="1.5" /><path d="M28.5 252.6 V240.1 L47 251.2 L40 255.5" fill="none" stroke="#8f8e86" stroke-width="1.6" /><ellipse cx="26" cy="261.5" rx="4.6" ry="5.8" fill="none" stroke="#8f8e86" stroke-width="1.5"/><path d="M21.6 258.6 H30.4 M18.8 256 L21.6 258 M33.2 256 L30.4 258 M18.2 262 H21.4 M30.6 262 H33.8 M18.8 268 L21.6 265.5 M33.2 268 L30.4 265.5" fill="none" stroke="#8f8e86" stroke-width="1.4" /><path d="M45.2 310 V300.8 H20.3 V319.1 H30.7 M25.3 323 H30.7 V319.1" fill="none" stroke="#8f8e86" stroke-width="1.8" /><circle cx="40" cy="318.5" r="6.6" fill="none" stroke="#8f8e86" stroke-width="1.8"/><path d="M37 316 L39.2 318.3 L37 320.6 M43.2 315.4 L41 317.7 L43.2 320" fill="none" stroke="#8f8e86" stroke-width="1.4" /><path d="M31 360.9 H22 Q20.1 360.9 20.1 362.8 V379.2 Q20.1 381 22 381 H38.8 Q40.7 381 40.7 379.2 V373.8 Q40.7 371.9 38.8 371.9 H31 V362.8 Q31 360.9 29 360.9 M20.1 371.9 H31 V381" fill="none" stroke="#8f8e86" stroke-width="1.8" /><rect x="36.2" y="355.9" width="9.5" height="9" rx="2" fill="none" stroke="#8f8e86" stroke-width="1.8"/><path d="M27.5 413.5 H38.5 M29.5 413.5 V424 L22.5 437 Q21.8 439 23.8 439 H42.2 Q44.2 439 43.5 437 L36.5 424 V413.5 M25.2 432 H40.8" fill="none" stroke="#8f8e86" stroke-width="1.6" /><path d="M31.4 472 L19.8 496 H44 Z M31.4 472 L33.5 491 L21.5 494.5 M33.5 491 L28.8 488.6 L21.5 494.5" fill="none" stroke="#8f8e86" stroke-width="1.5" /><path d="M31.3 497.6 L41 487.8" fill="none" stroke="#8f8e86" stroke-width="4.2" /><path d="M31.3 497.6 L41 487.8" fill="none" stroke="#272822" stroke-width="1.4" /><circle cx="43.6" cy="485.5" r="4.6" fill="#8f8e86"/><circle cx="44.6" cy="484.6" r="2.0" fill="#272822"/><path d="M44.6 484.6 L48 481.2" fill="none" stroke="#272822" stroke-width="2.2" /><path d="M33.5 534 C25.5 534 21.2 538.5 21.2 544.5 C21.2 550 27 554.5 33.5 557 C40 554.5 45.9 550 45.9 544.5 C45.9 538.5 41.5 534 33.5 534 Z" fill="#8f8e86" /><ellipse cx="27.3" cy="543.6" rx="3.6" ry="5.2" fill="#272822" transform="rotate(-28 27.3 543.6)"/><ellipse cx="39.8" cy="543.6" rx="3.6" ry="5.2" fill="#272822" transform="rotate(28 39.8 543.6)"/><circle cx="27.6" cy="544.5" r="1.5" fill="#8f8e86"/><circle cx="39.4" cy="544.5" r="1.5" fill="#8f8e86"/><path d="M29 534.5 L27.3 529.8 M38 534.5 L39.6 529.8" fill="none" stroke="#8f8e86" stroke-width="1.3" /><circle cx="27.2" cy="529.7" r="1.9" fill="#8f8e86"/><circle cx="39.6" cy="529.7" r="1.9" fill="#8f8e86"/><path d="M39.3 587 L47 591.8 V609 L39.3 613.5 Z M39.3 587 L30.7 595.8 M19.5 595 L24.9 590.6 L39.3 604 M19.5 595 V606 L24.9 610.5 L30.7 605 M23.5 594.5 L39.3 613.5 M21.6 596.3 V605.3 L27.4 601.5 Z M39.3 597 L36.2 600 L39.3 603" fill="none" stroke="#8f8e86" stroke-width="1.6" /><circle cx="24" cy="656.5" r="1.5" fill="#8f8e86"/><circle cx="33" cy="656.5" r="1.5" fill="#8f8e86"/><circle cx="42" cy="656.5" r="1.5" fill="#8f8e86"/><circle cx="33.1" cy="766.4" r="13.6" fill="none" stroke="#8f8e86" stroke-width="1.5"/><circle cx="33.1" cy="763.4" r="5.8" fill="none" stroke="#8f8e86" stroke-width="1.5"/><path d="M24.6 776.6 Q26.5 770.2 33.1 770.2 Q38 770.2 40.5 773" fill="none" stroke="#8f8e86" stroke-width="1.5" /><path d="M43.35 824.48 L46.39 826.86 L44.79 830.73 L40.96 830.27 L39.57 831.66 L40.03 835.49 L36.16 837.09 L33.78 834.05 L31.82 834.05 L29.44 837.09 L25.57 835.49 L26.03 831.66 L24.64 830.27 L20.81 830.73 L19.21 826.86 L22.25 824.48 L22.25 822.52 L19.21 820.14 L20.81 816.27 L24.64 816.73 L26.03 815.34 L25.57 811.51 L29.44 809.91 L31.82 812.95 L33.78 812.95 L36.16 809.91 L40.03 811.51 L39.57 815.34 L40.96 816.73 L44.79 816.27 L46.39 820.14 L43.35 822.52 Z" fill="none" stroke="#8f8e86" stroke-width="1.7" /><circle cx="32.8" cy="823.5" r="3.6" fill="none" stroke="#8f8e86" stroke-width="1.7"/><circle cx="42.4" cy="206.1" r="9.3" fill="#0078d4"/><text x="42.4" y="210.7" font-family="'Liberation Sans',sans-serif" font-size="12.5" font-weight="bold" fill="#ffffff" text-anchor="middle" >9</text><circle cx="42.4" cy="264.6" r="9.3" fill="#0078d4"/><text x="42.4" y="269.20000000000005" font-family="'Liberation Sans',sans-serif" font-size="12.5" font-weight="bold" fill="#ffffff" text-anchor="middle" >1</text><circle cx="42.5" cy="776.4" r="9.3" fill="#0078d4"/><text x="42.5" y="781.0" font-family="'Liberation Sans',sans-serif" font-size="12.5" font-weight="bold" fill="#ffffff" text-anchor="middle" >1</text><circle cx="301.5" cy="73.5" r="1.35" fill="#c5c5c0"/><circle cx="307.5" cy="73.5" r="1.35" fill="#c5c5c0"/><circle cx="313.5" cy="73.5" r="1.35" fill="#c5c5c0"/><path d="M68.5 105.8 L74 111.3 L79.5 105.8" fill="none" stroke="#c5c5c0" stroke-width="1.3" /><path d="M231 115 H225.6 V100.8 H233.3 L238.4 105.9 V109 M233.3 100.8 V105.9 H238.4 M237.6 109.6 V118 M233.4 113.8 H241.8" fill="none" stroke="#c5c5c0" stroke-width="1.2" /><path d="M258.5 115 H252.8 V100.8 H259 L261.3 103 H269.2 V109 M252.8 106 H259 L261.3 103 M266 109.6 V118 M261.8 113.8 H270.2" fill="none" stroke="#c5c5c0" stroke-width="1.2" /><path d="M284.6 103.3 A6.8 6.8 0 1 0 291.4 101.8 M284 100 V103.8 H287.8" fill="none" stroke="#c5c5c0" stroke-width="1.3" /><path d="M314.8 105 V102.5 Q314.8 101.4 316 101.4 H324.7 Q325.9 101.4 325.9 102.6 V110.2 Q325.9 111.4 324.7 111.4 H322.2" fill="none" stroke="#c5c5c0" stroke-width="1.2" /><rect x="311.6" y="105.3" width="10.4" height="9.8" rx="1.2" fill="none" stroke="#c5c5c0" stroke-width="1.2"/><path d="M314 110.2 H319.6" fill="none" stroke="#c5c5c0" stroke-width="1.3" /><path d="M83.2 132 L88.8 137.6 L94.4 132" fill="none" stroke="#c5c5c0" stroke-width="1.25" /><path d="M87.2 261.5 L92.8 266.9 L87.2 272.3" fill="none" stroke="#c5c5c0" stroke-width="1.25" /><path d="M87.2 287.9 L92.8 293.3 L87.2 298.7" fill="none" stroke="#c5c5c0" stroke-width="1.25" /><path d="M87.2 314.3 L92.8 319.7 L87.2 325.1" fill="none" stroke="#c5c5c0" stroke-width="1.25" /><path d="M87.2 340.7 L92.8 346.1 L87.2 351.5" fill="none" stroke="#c5c5c0" stroke-width="1.25" /><path d="M87.2 367.1 L92.8 372.5 L87.2 377.9" fill="none" stroke="#c5c5c0" stroke-width="1.25" /><path d="M87.2 393.5 L92.8 398.9 L87.2 404.3" fill="none" stroke="#c5c5c0" stroke-width="1.25" /><path d="M87.2 419.9 L92.8 425.3 L87.2 430.7" fill="none" stroke="#c5c5c0" stroke-width="1.25" /><path d="M87.2 446.3 L92.8 451.7 L87.2 457.1" fill="none" stroke="#c5c5c0" stroke-width="1.25" /><path d="M87.2 472.7 L92.8 478.1 L87.2 483.5" fill="none" stroke="#c5c5c0" stroke-width="1.25" /><path d="M87.2 499.1 L92.8 504.5 L87.2 509.9" fill="none" stroke="#c5c5c0" stroke-width="1.25" /><path d="M71 808.1 L76.6 813.5 L71 818.9" fill="none" stroke="#c5c5c0" stroke-width="1.25" /><path d="M71 834.1 L76.6 839.5 L71 844.9" fill="none" stroke="#c5c5c0" stroke-width="1.25" /><text x="90.5" y="167.00000000000003" font-family="'Liberation Sans',sans-serif" font-size="15" font-weight="normal" fill="#cbcb41" text-anchor="start" letter-spacing="-0.6">{ }</text><text x="90.5" y="193.40000000000003" font-family="'Liberation Sans',sans-serif" font-size="15" font-weight="normal" fill="#cbcb41" text-anchor="start" letter-spacing="-0.6">{ }</text><text x="90.5" y="219.8" font-family="'Liberation Sans',sans-serif" font-size="15" font-weight="normal" fill="#cbcb41" text-anchor="start" letter-spacing="-0.6">{ }</text><text x="90.5" y="246.20000000000002" font-family="'Liberation Sans',sans-serif" font-size="15" font-weight="normal" fill="#cbcb41" text-anchor="start" letter-spacing="-0.6">{ }</text><circle cx="310" cy="133.5" r="4.6" fill="#4b7b55"/><circle cx="310" cy="265.8" r="4.6" fill="#4b7b55"/><path d="M80.9 535.3 V523.8 H83.8 L87.5 529.8 L91.2 523.8 H94.1 V535.3 H91.4 V528.6 L87.5 534 L83.6 528.6 V535.3 Z" fill="#519aba" /><path d="M84.8 552.0999999999999 H93 M84.8 555.1999999999999 H94.6 M84.8 558.3 H91.5 M84.8 561.4 H93.8" fill="none" stroke="#c5c5c0" stroke-width="1.4" /><path d="M84.8 578.5 H93 M84.8 581.6 H94.6 M84.8 584.7 H91.5 M84.8 587.8000000000001 H93.8" fill="none" stroke="#c5c5c0" stroke-width="1.4" /><path d="M362.80 69.9 A4.3 4.4 0 1 0 362.80 76.3" fill="none" stroke="#519aba" stroke-width="2.7" /><path d="M506.60 69.9 A4.3 4.4 0 1 0 506.60 76.3" fill="none" stroke="#519aba" stroke-width="2.7" /><text x="640" y="79" font-family="'Liberation Sans',sans-serif" font-size="15" font-weight="normal" fill="#cbcb41" text-anchor="start" letter-spacing="-0.6">{ }</text><path d="M769.5 69.8 L778.8 79.1 M778.8 69.8 L769.5 79.1" fill="none" stroke="#f8f8f2" stroke-width="1.5" /><path d="M808.6 79.3 V67.6 H811.6 L815.6 73.8 L819.6 67.6 H822.6 V79.3 H819.8 V72.5 L815.6 78 L811.4 72.5 V79.3 Z" fill="#519aba" /><circle cx="1214.2" cy="67.6" r="2.4" fill="none" stroke="#c5c5c0" stroke-width="1.3"/><circle cx="1226" cy="80.3" r="2.4" fill="none" stroke="#c5c5c0" stroke-width="1.3"/><path d="M1214.2 70 V76.5 Q1214.2 80.3 1218 80.3 H1220.5 M1218.5 78 L1220.8 80.3 L1218.5 82.6 M1226 77.9 V71.4 Q1226 67.6 1222.2 67.6 H1219.7 M1221.7 65.3 L1219.4 67.6 L1221.7 69.9" fill="none" stroke="#c5c5c0" stroke-width="1.3" /><rect x="1244.6" y="65.4" width="14.4" height="14.6" rx="1.3" fill="none" stroke="#c5c5c0" stroke-width="1.3"/><path d="M1251.8 65.4 V80" fill="none" stroke="#c5c5c0" stroke-width="1.3" /><path d="M1273.5 74.2 H1289.5 M1279.5 68.2 L1273.5 74.2 L1279.5 80.2" fill="none" stroke="#c5c5c0" stroke-width="1.3" /><path d="M1304.5 74.2 H1320.5 M1314.5 68.2 L1320.5 74.2 L1314.5 80.2" fill="none" stroke="#a9a9a3" stroke-width="1.3" /><circle cx="1338.5" cy="73.4" r="1.35" fill="#c5c5c0"/><circle cx="1344.5" cy="73.4" r="1.35" fill="#c5c5c0"/><circle cx="1350.5" cy="73.4" r="1.35" fill="#c5c5c0"/><path d="M416.3 101.8 L422.7 108.2 L416.3 114.6" fill="none" stroke="#cfcfca" stroke-width="1.2" /><path d="M545.6 101.8 L552.0 108.2 L545.6 114.6" fill="none" stroke="#cfcfca" stroke-width="1.2" /><path d="M676.2 101.8 L682.6 108.2 L676.2 114.6" fill="none" stroke="#cfcfca" stroke-width="1.2" /><text x="433.2" y="113.2" font-family="'Liberation Sans',sans-serif" font-size="15" font-weight="normal" fill="#cbcb41" text-anchor="start" letter-spacing="-0.6">{ }</text><text x="690.5" y="113.2" font-family="'Liberation Sans',sans-serif" font-size="15" font-weight="normal" fill="#d4d4cf" text-anchor="start" letter-spacing="-0.6">{ }</text><circle cx="808" cy="613.6" r="1.35" fill="#c5c5c0"/><circle cx="814" cy="613.6" r="1.35" fill="#c5c5c0"/><circle cx="820" cy="613.6" r="1.35" fill="#c5c5c0"/><path d="M1283 608.2 H1299.8 M1283 611.6 H1299.8 M1283 615.2 H1292.6 M1283 618.6 H1292.6 M1294.6 614.8 L1299 619.2 M1299 614.8 L1294.6 619.2" fill="none" stroke="#d0d0cb" stroke-width="1.2" /><path d="M1317.1 615.6 L1323 610 L1328.9 615.6" fill="none" stroke="#d0d0cb" stroke-width="1.2" /><path d="M1344.2 608.4 L1354 618.2 M1354 608.4 L1344.2 618.2" fill="none" stroke="#d0d0cb" stroke-width="1.3" /><path d="M351.8 836.2 L358.4 842.2 L351.8 848.2" fill="none" stroke="#c5c5c0" stroke-width="1.3" /><path d="M19.3 862.8 L24.1 867.3 L19.3 871.8 M29.4 858.3 L24.6 863 L29.4 867.7" fill="none" stroke="#ffffff" stroke-width="1.25" /><circle cx="59.2" cy="860.7" r="2.4" fill="none" stroke="#ffffff" stroke-width="1.3"/><circle cx="59.2" cy="870.5" r="2.4" fill="none" stroke="#ffffff" stroke-width="1.3"/><circle cx="66.6" cy="863.3" r="2.4" fill="none" stroke="#ffffff" stroke-width="1.3"/><path d="M59.2 863.1 V868.1 M66.6 865.7 Q66.6 867 63 867 Q59.2 867 59.2 868" fill="none" stroke="#ffffff" stroke-width="1.3" /><path d="M137.5 863.5 A6.5 6.5 0 0 1 150 864 M151.8 861.5 L150 864.3 L147.2 862.6 M151.5 867.5 A6.5 6.5 0 0 1 139 867 M137.2 869.5 L139 866.7 L141.8 868.4" fill="none" stroke="#ffffff" stroke-width="1.3" /><path d="M175.2 857.5 V874 M181.5 859 V873" fill="none" stroke="#ffffff" stroke-width="1.2" /><circle cx="175.2" cy="861" r="1.8" fill="none" stroke="#ffffff" stroke-width="1.2"/><circle cx="175.2" cy="871" r="1.8" fill="none" stroke="#ffffff" stroke-width="1.2"/><circle cx="184.5" cy="864.5" r="2.2" fill="none" stroke="#ffffff" stroke-width="1.2"/><circle cx="216.5" cy="866.2" r="7" fill="none" stroke="#ffffff" stroke-width="1.25"/><path d="M213.6 863.3 L219.4 869.1 M219.4 863.3 L213.6 869.1" fill="none" stroke="#ffffff" stroke-width="1.2" /><path d="M249.3 858.8 L257 872.8 H241.6 Z M249.3 863.3 V868.2 M249.3 869.8 V871.1" fill="none" stroke="#ffffff" stroke-width="1.25" /><path d="M295.5 860.2 L304.8 866.2 L298.6 870.5 M295.5 860.2 V864" fill="none" stroke="#ffffff" stroke-width="1.25" /><ellipse cx="292" cy="869.7" rx="2.8" ry="3.5" fill="none" stroke="#fff" stroke-width="1.2"/><path d="M288 866.5 L289.6 867.6 M296 866.5 L294.4 867.6 M287.6 870 H289.2 M294.8 870 H296.4 M288 873.5 L289.6 872.2 M296 873.5 L294.4 872.2" fill="none" stroke="#ffffff" stroke-width="1.1" /><circle cx="531.6" cy="866.2" r="7" fill="none" stroke="#ffffff" stroke-width="1.25"/><path d="M531.6 864.8 V870.6 M531.6 861.8 V863.2" fill="none" stroke="#ffffff" stroke-width="1.5" /><path d="M722.5 859 L735.5 872.5 M722.5 872.5 L729 866 M731.5 863.5 L734.5 860.5 M735.8 859.2 Q733.2 859 732.5 861.5 M721.8 861.4 L724 859.2" fill="none" stroke="#ffffff" stroke-width="1.4" /><path d="M730.5 865.5 Q735.2 866.5 736 862.2 L733.5 862.4 L733.4 860 Q729.5 859.4 730.5 865.5" fill="none" stroke="#ffffff" stroke-width="1.1" /><path d="M856.75 866.89 L858.75 868.12 L858.01 869.89 L855.73 869.36 L854.76 870.33 L855.29 872.61 L853.52 873.35 L852.29 871.35 L850.91 871.35 L849.68 873.35 L847.91 872.61 L848.44 870.33 L847.47 869.36 L845.19 869.89 L844.45 868.12 L846.45 866.89 L846.45 865.51 L844.45 864.28 L845.19 862.51 L847.47 863.04 L848.44 862.07 L847.91 859.79 L849.68 859.05 L850.91 861.05 L852.29 861.05 L853.52 859.05 L855.29 859.79 L854.76 862.07 L855.73 863.04 L858.01 862.51 L858.75 864.28 L856.75 865.51 Z" fill="none" stroke="#ffffff" stroke-width="1.2" /><circle cx="851.6" cy="866.2" r="2.1" fill="none" stroke="#ffffff" stroke-width="1.2"/><ellipse cx="1051.4" cy="867" rx="4" ry="5.2" fill="none" stroke="#fff" stroke-width="1.2"/><path d="M1047.4 865 H1055.4 M1044.6 861.5 L1047.5 863.5 M1058.2 861.5 L1055.3 863.5 M1043.8 867.5 H1047.3 M1055.5 867.5 H1059 M1044.6 873 L1047.5 870.8 M1058.2 873 L1055.3 870.8 M1048.5 861 Q1051.4 858.6 1054.3 861" fill="none" stroke="#ffffff" stroke-width="1.2" /><path d="M1082 859.6 L1092.6 866.2 L1082 872.8 Z" fill="none" stroke="#ffffff" stroke-width="1.2" /></svg>
<div class="a" style="left:984px;top:95.6px;width:262px;height:37.6px;background:#1e1f1c;box-shadow:0 2px 8px rgba(0,0,0,0.6)"></div>
<svg width="1376" height="884" viewBox="0 0 1376 884"><rect x="998.5" y="108.65" width="2.2" height="2.2" fill="#7a7a76"/><rect x="998.5" y="113.30000000000001" width="2.2" height="2.2" fill="#7a7a76"/><rect x="998.5" y="118.10000000000001" width="2.2" height="2.2" fill="#7a7a76"/><rect x="1003.4" y="108.65" width="2.2" height="2.2" fill="#7a7a76"/><rect x="1003.4" y="113.30000000000001" width="2.2" height="2.2" fill="#7a7a76"/><rect x="1003.4" y="118.10000000000001" width="2.2" height="2.2" fill="#7a7a76"/><path d="M1020.2 110.2 A7 7 0 1 0 1028.8 110.2" fill="none" stroke="#4fcc4f" stroke-width="1.9"/><path d="M1024.5 106.4 V115.8" fill="none" stroke="#4fcc4f" stroke-width="1.9"/><path d="M1050.2 107.2 V121.6" fill="none" stroke="#75beff" stroke-width="1.9"/><path d="M1055.2 108.2 L1063 114.4 L1055.2 120.6 Z" fill="none" stroke="#75beff" stroke-width="1.7"/><path d="M1080.6 114 A7.4 6 0 0 1 1093.2 110.8" fill="none" stroke="#75beff" stroke-width="1.9"/><path d="M1094 106.8 V112.6 H1088.6" fill="none" stroke="#75beff" stroke-width="1.7"/><circle cx="1087.4" cy="119.3" r="2.5" fill="#75beff"/><path d="M1118.5 105.6 V115 M1113.5 110.4 L1118.5 115.4 L1123.5 110.4" fill="none" stroke="#75beff" stroke-width="1.7"/><circle cx="1118.5" cy="120.6" r="2.5" fill="#75beff"/><path d="M1149.9 116.2 V106.4 M1144.9 111.2 L1149.9 106.2 L1154.9 111.2" fill="none" stroke="#75beff" stroke-width="1.7"/><circle cx="1149.9" cy="120.6" r="2.5" fill="#75beff"/><path d="M1175.5 110 A6.8 6.8 0 1 1 1174.6 116.5" fill="none" stroke="#89d185" stroke-width="1.8"/><path d="M1174.6 105.8 V110.8 H1179.6" fill="none" stroke="#89d185" stroke-width="1.8"/><rect x="1205.8" y="108.3" width="12.2" height="12.2" fill="none" stroke="#f48771" stroke-width="1.8"/><path d="M1227 112.2 L1231.4 116.4 L1235.8 112.2" fill="none" stroke="#a8a8a2" stroke-width="1.2"/><defs><filter id="sh" x="-50%" y="-50%" width="200%" height="200%"><feGaussianBlur in="SourceAlpha" stdDeviation="2.2"/><feOffset dx="1.5" dy="2" result="b"/><feFlood flood-color="#dcdcdc" flood-opacity="0.45"/><feComposite in2="b" operator="in"/><feMerge><feMergeNode/><feMergeNode in="SourceGraphic"/></feMerge></filter></defs><circle cx="745.5" cy="339.5" r="26" fill="#ff0000" filter="url(#sh)"/><text x="745.5" y="349.1" font-family="'Liberation Sans',sans-serif" font-size="26.5" font-weight="bold" fill="#ffffff" text-anchor="middle">1</text><circle cx="1104.5" cy="155.2" r="26" fill="#ff0000" filter="url(#sh)"/><text x="1104.5" y="164.8" font-family="'Liberation Sans',sans-serif" font-size="26.5" font-weight="bold" fill="#ffffff" text-anchor="middle">2</text><circle cx="879.4" cy="825.4" r="26" fill="#ff0000" filter="url(#sh)"/><text x="879.4" y="835.0" font-family="'Liberation Sans',sans-serif" font-size="26.5" font-weight="bold" fill="#ffffff" text-anchor="middle">3</text><circle cx="256.4" cy="526.3" r="26" fill="#ff0000" filter="url(#sh)"/><text x="256.4" y="535.9" font-family="'Liberation Sans',sans-serif" font-size="26.5" font-weight="bold" fill="#ffffff" text-anchor="middle">4</text></svg>
</body></html>
